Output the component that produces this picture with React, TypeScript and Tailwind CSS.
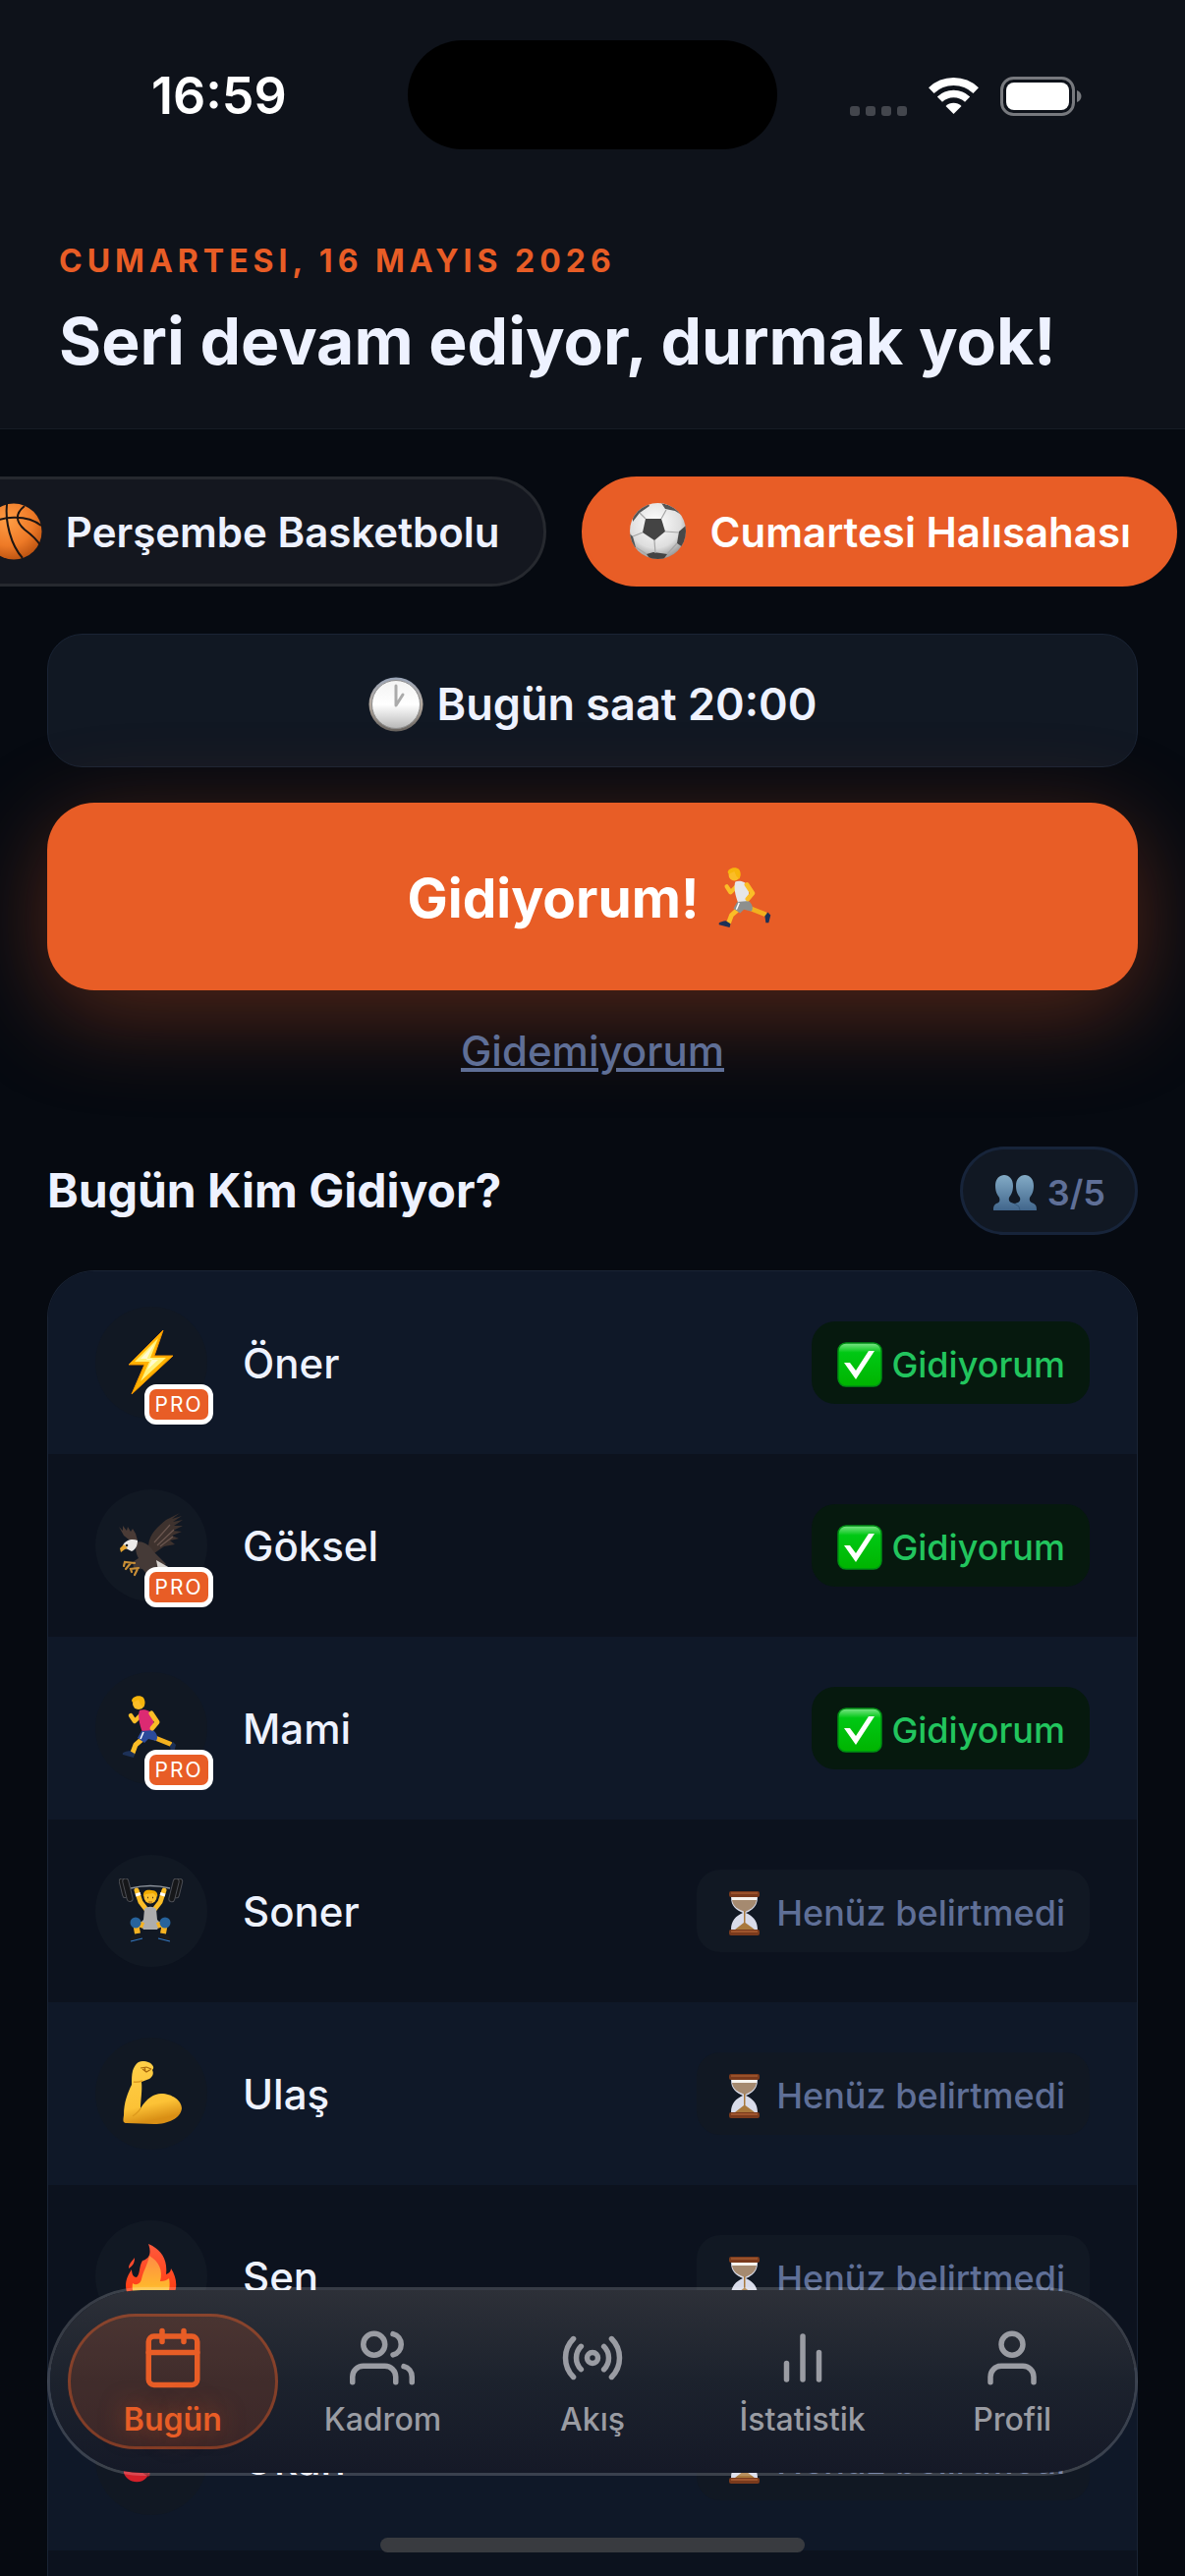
import { useState } from 'react';
import type { IconType } from 'react-icons';
import { FiBarChart2, FiCalendar, FiRadio, FiUser, FiUsers } from 'react-icons/fi';

type Member = {
  name: string;
  avatar: React.ReactNode;
  pro?: boolean;
  going?: boolean;
};

type Tab = {
  label: string;
  Icon: IconType;
};

function Basketball() {
  return (
    <svg viewBox="0 0 60 60" className="size-[60px] shrink-0" aria-hidden="true">
      <defs>
        <radialGradient id="ball" cx="0.4" cy="0.3" r="0.75">
          <stop offset="0" stopColor="#ff9d45" />
          <stop offset="0.6" stopColor="#ee7a27" />
          <stop offset="1" stopColor="#b8500f" />
        </radialGradient>
      </defs>
      <circle cx="31" cy="30" r="28.5" fill="url(#ball)" />
      <g fill="none" stroke="#1d1512" strokeWidth="2">
        <path d="M24 2C22 20 28 44 40 57" />
        <path d="M42 4C32 12 33 20 42 28C50 34 55 39 58 44" />
        <path d="M3 24C18 14 44 12 59 24" />
        <path d="M7 45C11 32 8 26 4 22" />
      </g>
    </svg>
  );
}

function Football() {
  return (
    <svg viewBox="0 0 60 60" className="size-[60px] shrink-0" aria-hidden="true">
      <defs>
        <radialGradient id="leather" cx="0.45" cy="0.35" r="0.65">
          <stop offset="0" stopColor="#ffffff" />
          <stop offset="0.7" stopColor="#dedede" />
          <stop offset="1" stopColor="#9b9b9b" />
        </radialGradient>
        <clipPath id="footballEdge">
          <circle cx="30.5" cy="29.5" r="28.5" />
        </clipPath>
      </defs>
      <circle cx="30.5" cy="29.5" r="28.5" fill="url(#leather)" />
      <g clipPath="url(#footballEdge)">
        <path d="M18 17L34 17L38 30L27 39L15 31Z" fill="#444" />
        <path d="M5 12L20 0L22 4L12 11L5 20Z" fill="#555" />
        <path d="M34 1L52 6L56 14L48 9L38 7Z" fill="#555" />
        <path d="M0 31L5 35L8 46L2 46Z" fill="#555" />
        <path d="M59 24L52 30L50 42L56 46L60 36Z" fill="#484848" />
        <path d="M19 53L26 51L40 53L35 60H24Z" fill="#444" />
        <path d="M18 17L12 11M34 17L39 8M38 30L52 31M27 39L28 52M15 31L5 35M8 46L19 53M50 42L40 53" fill="none" stroke="#a5a5a5" strokeWidth="1.2" />
      </g>
    </svg>
  );
}

function Clock() {
  return (
    <svg viewBox="0 0 56 56" className="size-14 shrink-0" aria-hidden="true">
      <defs>
        <linearGradient id="rim" x1="0" y1="0" x2="0" y2="1">
          <stop offset="0" stopColor="#9aa5b8" />
          <stop offset="0.5" stopColor="#b5aaa0" />
          <stop offset="1" stopColor="#66625e" />
        </linearGradient>
        <linearGradient id="face" x1="0" y1="0" x2="0" y2="1">
          <stop offset="0" stopColor="#f3f3f3" />
          <stop offset="0.5" stopColor="#ffffff" />
          <stop offset="1" stopColor="#b9b9b9" />
        </linearGradient>
      </defs>
      <circle cx="28" cy="28" r="27.5" fill="url(#rim)" />
      <circle cx="28" cy="28" r="24.5" fill="url(#face)" stroke="#8f8f8f" strokeWidth="1" />
      <path d="M28 9V29L35 18" fill="none" stroke="#ababab" strokeWidth="3" strokeLinecap="round" strokeLinejoin="round" />
    </svg>
  );
}

function Runner({ shirt, shorts, className }: { shirt: string; shorts: string; className: string }) {
  return (
    <svg viewBox="0 0 66 66" className={className} aria-hidden="true">
      <g fill="none" strokeLinecap="round" strokeLinejoin="round">
        <path d="M37 43L52 49" stroke="#f2b01f" strokeWidth="5" />
        <path d="M25 43L17 50L14 58" stroke="#fbbd27" strokeWidth="5" />
        <path d="M23 19L16 26L12 20" stroke="#fbbd27" strokeWidth="4.5" />
      </g>
      <circle cx="20" cy="8" r="6" fill="#fbbd27" />
      <path d="M13 5C14 0 22 -1 25 2C27 5 27 9 25 12L22 9L20 4L14 7Z" fill="#f7b50c" />
      <path d="M21 15C25 13 32 15 34 19C36 25 35 31 35 36L24 37C21 30 19 20 21 15Z" fill={shirt} />
      <path d="M23 36L35 35C39 39 40 42 38 46L30 44L26 48L19 43Z" fill={shorts} />
      <path d="M33 18L39 27L34 33" fill="none" stroke="#fbbd27" strokeWidth="5" strokeLinecap="round" strokeLinejoin="round" />
      <path d="M11 56L16 59L15 63L4 60C3 58 5 57 11 56Z" fill="#1d3157" />
      <path d="M52 51L55 47L58 50L56 58L53 58Z" fill="#1d3157" />
      <path d="M25 37L22 44" stroke="#fff" strokeWidth="1.5" />
    </svg>
  );
}

function Busts() {
  return (
    <svg viewBox="0 0 46 40" className="h-10 w-[46px] shrink-0" aria-hidden="true">
      <defs>
        <linearGradient id="bust" x1="0" y1="0" x2="0" y2="1">
          <stop offset="0" stopColor="#83abc6" />
          <stop offset="1" stopColor="#41668c" />
        </linearGradient>
      </defs>
      <path
        d="M12 2C17 2 21 6 21 13C21 19 19 22 17 25C16 29 18 30 22 31L23 31C27 30 29 29 28 25C26 22 24 19 24 13C24 6 28 2 33 2C38 2 42 6 42 13C42 19 40 22 38 25C37 29 39 30 42 31C45 33 45 35 45 38H1C1 35 1 33 4 31C7 30 8 29 7 25C5 22 3 19 3 13C3 6 7 2 12 2Z"
        fill="url(#bust)"
      />
      <path d="M22 31L27 34L28 38" fill="none" stroke="#35587c" strokeWidth="1" />
    </svg>
  );
}

function CheckMark() {
  return (
    <svg viewBox="0 0 48 48" className="size-12 shrink-0" aria-hidden="true">
      <defs>
        <linearGradient id="checkFill" x1="0" y1="0" x2="0" y2="1">
          <stop offset="0" stopColor="#7ee58a" />
          <stop offset="0.22" stopColor="#00c814" />
          <stop offset="1" stopColor="#00b400" />
        </linearGradient>
      </defs>
      <rect x="2" y="2" width="44" height="44" rx="8" fill="url(#checkFill)" stroke="#008f14" strokeWidth="1.5" />
      <path d="M8 22H14L20 30L33 10H39L20 39Z" fill="#fff" />
    </svg>
  );
}

function Hourglass() {
  return (
    <svg viewBox="0 0 48 48" className="size-12 shrink-0" aria-hidden="true">
      <path d="M10 8H37C37 17 32 21 25 24C32 27 37 32 37 41H10C10 32 15 27 22 24C15 21 10 17 10 8Z" fill="#d9dcea" />
      <path d="M11 11H36C35 17 31 20 24 23C16 20 12 17 11 11Z" fill="#a58a70" />
      <path d="M11 8H36V11H11Z" fill="#f6f3ee" />
      <path d="M23 22H24.5V34L34 41H14L23 34Z" fill="#a9793d" />
      <rect x="8" y="2" width="31" height="6" rx="2" fill="#7a3a1c" />
      <path d="M10 4H37" stroke="#b8683a" strokeWidth="1" />
      <rect x="8" y="41" width="31" height="6" rx="2" fill="#7a3a1c" />
      <path d="M10 43H37" stroke="#c4713f" strokeWidth="1" />
    </svg>
  );
}

function Bolt() {
  return (
    <svg viewBox="0 0 66 66" className="size-[66px]" aria-hidden="true">
      <path d="M45 0L10 35H26L13 65L55 26H36Z" fill="#ffb300" stroke="#f59300" strokeWidth="1" />
      <path d="M40 8L16 32H31L22 52L48 28H32Z" fill="#fff27a" />
      <path d="M36 14L22 29H34L29 40L40 30H28Z" fill="#fffbd0" />
    </svg>
  );
}

function Eagle() {
  return (
    <svg viewBox="0 0 66 66" className="size-[66px]" aria-hidden="true">
      <path d="M0 14L4 18L4 13L8 18L9 14L12 19L14 16L17 21L19 28L10 27L5 23Z" fill="#4a3b36" />
      <path d="M30 34C31 20 40 14 48 7L62 0L54 6L64 3L55 9L65 7L56 13L65 13L55 18L64 19L54 23L61 26L52 28L57 32L46 34L36 41Z" fill="#3e322e" />
      <path d="M36 30L52 12M39 33L56 17M42 34L55 24" stroke="#6b5750" strokeWidth="1.2" fill="none" />
      <path d="M17 30C24 27 32 33 36 40L48 52L40 56L28 62L24 57L15 56L14 50L20 46C17 41 17 36 17 30Z" fill="#453a37" />
      <path d="M38 48L52 56L40 58Z" fill="#d8d4d0" />
      <path d="M4 33C7 27 14 26 19 28C19 33 17 37 13 39L7 36Z" fill="#eceae8" />
      <path d="M5 32L1 36L2 40L6 37L9 36Z" fill="#e6a531" />
      <circle cx="8" cy="33" r="1.3" fill="#222" />
      <path d="M16 51L6 50L5 54M12 51L7 57M20 56L12 57L13 60M19 57L16 63" fill="none" stroke="#c98f36" strokeWidth="2.2" strokeLinecap="round" />
    </svg>
  );
}

function Lifter() {
  return (
    <svg viewBox="0 0 66 66" className="size-[66px]" aria-hidden="true">
      <path d="M12 10Q32 5 52 10" fill="none" stroke="#8d939c" strokeWidth="1.5" />
      <g fill="#161719" stroke="#4c4e54" strokeWidth="1">
        <rect x="2" y="0" width="6" height="20" rx="3" transform="rotate(-14 4 10)" />
        <rect x="6" y="0" width="6" height="24" rx="3" transform="rotate(-14 8 12)" />
        <rect x="57" y="0" width="6" height="20" rx="3" transform="rotate(14 60 10)" />
        <rect x="53" y="0" width="6" height="24" rx="3" transform="rotate(14 56 12)" />
      </g>
      <path d="M18 12L22 24L29 33M46 12L42 24L35 33" fill="none" stroke="#fbbd27" strokeWidth="5" strokeLinecap="round" strokeLinejoin="round" />
      <path d="M17 17L22 15.500M42 15.500L47 17" stroke="#fff" strokeWidth="3" />
      <path d="M26 31C29 28 35 28 38 31L39 42L43 46L39 52H25L21 46L25 42Z" fill="#adadad" />
      <path d="M25 48L17 45L19 56M39 48L47 45L45 56" fill="none" stroke="#f6b221" strokeWidth="6" strokeLinejoin="round" />
      <circle cx="17" cy="45" r="5.5" fill="#27639c" />
      <circle cx="47" cy="45" r="5.5" fill="#27639c" />
      <circle cx="32" cy="19" r="6.5" fill="#fbc02d" />
      <path d="M25 19C24 12 29 11 33 12C38 12 40 15 39 19L35 15L27 16Z" fill="#f0aa00" />
      <path d="M29 19.5H30M34 19.5H35" stroke="#5b3b10" strokeWidth="1.6" />
      <path d="M30 24H34" stroke="#a85d1c" strokeWidth="1" />
      <path d="M17 57H22V60L12 64C11 61 13 59 17 57ZM47 57H42V60L52 64C53 61 51 59 47 57Z" fill="#1b1b1e" />
      <path d="M12 64L24 61M52 64L40 61" stroke="#3478c2" strokeWidth="1.2" />
    </svg>
  );
}

function Biceps() {
  return (
    <svg viewBox="0 0 66 66" className="size-[66px]" aria-hidden="true">
      <defs>
        <linearGradient id="skin" x1="0" y1="0" x2="0.2" y2="1">
          <stop offset="0" stopColor="#ffd04a" />
          <stop offset="0.75" stopColor="#fcc236" />
          <stop offset="1" stopColor="#d98f15" />
        </linearGradient>
      </defs>
      <path
        d="M14 10C16 4 19 0 24 0C29 0 33 2 34 4C36 6 35 8 34 9C36 13 34 16 31 18L23 21C24 30 22 40 22 48C28 38 36 33 43 33C54 33 64 40 64 48C63 58 50 64 36 64L8 63C4 63 4 61 5 55C5 42 9 32 13 24C13 18 13 14 14 10Z"
        fill="url(#skin)"
      />
      <path d="M22 7L28 6L33 8M24 8L28 11L33 8M26 6L27 10" fill="none" stroke="#a8680c" strokeWidth="1.2" />
      <path d="M15 21C18 22 21 21 24 20M22 48C20 52 17 54 14 56" fill="none" stroke="#dd9a1d" strokeWidth="1.5" />
    </svg>
  );
}

function Fire() {
  return (
    <svg viewBox="0 0 66 66" className="size-[66px]" aria-hidden="true">
      <defs>
        <linearGradient id="flame" x1="0" y1="0" x2="0" y2="1">
          <stop offset="0" stopColor="#ff5a3c" />
          <stop offset="1" stopColor="#ff3405" />
        </linearGradient>
        <linearGradient id="flameCore" x1="0" y1="0" x2="0" y2="1">
          <stop offset="0" stopColor="#ff8b45" />
          <stop offset="0.6" stopColor="#ffb52e" />
          <stop offset="1" stopColor="#fff066" />
        </linearGradient>
      </defs>
      <path d="M30 0C42 5 50 15 48 31C51 30 53 28 53 25C57 31 59 38 58 45C56 58 46 66 33 66C18 66 8 57 7 43C7 36 9 32 13 26C13 31 15 34 18 34C22 30 20 24 24 17C32 15 33 8 30 0Z" fill="url(#flame)" />
      <path d="M31 12C41 18 45 27 42 38C46 38 49 37 51 35C54 50 46 62 33 62C20 62 12 52 14 40C18 43 22 40 23 36C25 27 29 22 31 12Z" fill="url(#flameCore)" />
      <path d="M16 14C16 18 15 22 10 25C10 20 13 18 16 14Z" fill="#ff4a2d" />
    </svg>
  );
}

function BoxingGlove() {
  return (
    <svg viewBox="0 0 66 66" className="size-[66px]" aria-hidden="true">
      <path d="M18 20C20 6 34 0 48 4C62 8 66 22 60 32C54 42 42 42 34 44L28 52C24 57 15 58 9 53C3 48 4 42 9 37Z" fill="#d3202a" />
      <path d="M12 36L31 50" stroke="#8b1119" strokeWidth="3" />
      <path d="M27 17C36 16 43 21 42 29" fill="none" stroke="#8b1119" strokeWidth="2" />
    </svg>
  );
}

const members: Member[] = [
  { name: 'Öner', avatar: <Bolt />, pro: true, going: true },
  { name: 'Göksel', avatar: <Eagle />, pro: true, going: true },
  { name: 'Mami', avatar: <Runner shirt="#dc2a72" shorts="#2b4a9b" className="size-[66px]" />, pro: true, going: true },
  { name: 'Soner', avatar: <Lifter /> },
  { name: 'Ulaş', avatar: <Biceps /> },
  { name: 'Sen', avatar: <Fire /> },
  { name: 'Okan', avatar: <BoxingGlove /> },
];

const tabs: Tab[] = [
  { label: 'Bugün', Icon: FiCalendar },
  { label: 'Kadrom', Icon: FiUsers },
  { label: 'Akış', Icon: FiRadio },
  { label: 'İstatistik', Icon: FiBarChart2 },
  { label: 'Profil', Icon: FiUser },
];

function StatusBar() {
  return (
    <div className="grid grid-cols-[1fr_376px_1fr] items-center pt-[41px]">
      <span className="pt-0.5 pl-[154px] text-[52px] leading-[60px] font-semibold text-white">16:59</span>
      <div className="h-[111px] rounded-full bg-black" />
      <div className="flex items-center justify-end gap-[22px] pt-0.5 pr-[105px]">
        <div className="flex gap-1.5 self-end">
          {[0, 1, 2, 3].map((dot) => (
            <span key={dot} className="size-2.5 rounded-[3px] bg-[#43464d]" />
          ))}
        </div>
        <svg viewBox="0 0 51 38" className="h-[38px] w-[51px]" aria-hidden="true">
          <path d="M2.8 13.1A33 33 0 0 1 48.2 13.1" fill="none" stroke="#fff" strokeWidth="8" />
          <path d="M11.4 22.1A20.5 20.5 0 0 1 39.6 22.1" fill="none" stroke="#fff" strokeWidth="7.5" />
          <path d="M25.5 37L17.5 29A11.5 11.5 0 0 1 33.5 29Z" fill="#fff" />
        </svg>
        <svg viewBox="0 0 83 40" className="h-10 w-[83px]" aria-hidden="true">
          <rect x="1.5" y="1.5" width="73" height="37" rx="12" fill="none" stroke="#77797e" strokeWidth="3" />
          <rect x="6" y="6" width="64" height="28" rx="8" fill="#fff" />
          <path d="M78 14C84 16 84 24 78 26Z" fill="#77797e" />
        </svg>
      </div>
    </div>
  );
}

function MemberRow({ member, shaded }: { member: Member; shaded: boolean }) {
  return (
    <li className={`flex shrink-0 items-center px-12 py-9 ${shaded ? 'bg-[#0f1828]' : 'bg-[#0c121e]'}`}>
      <div className="relative flex size-[114px] items-center justify-center rounded-full bg-[#111823]">
        {member.avatar}
        {member.pro && (
          <span className="absolute -right-1.5 -bottom-1.5 flex h-[41px] w-[70px] items-center justify-center rounded-xl border-5 border-white bg-[#e85d26] text-[21px] leading-none tracking-[2px] text-white">
            PRO
          </span>
        )}
      </div>
      <span className="ml-9 flex-1 pt-0.5 text-[42px] leading-[52px] font-medium text-[#eef2ff]">{member.name}</span>
      {member.going ? (
        <span className="flex h-[84px] items-center gap-2 rounded-3xl bg-[#06190e] px-[25px] pt-1 text-[36px] font-medium text-[#22c55e]">
          <CheckMark />
          Gidiyorum
        </span>
      ) : (
        <span className="flex h-[84px] items-center gap-2 rounded-3xl bg-[#111823] px-[25px] pt-1 text-[36px] font-medium text-[#5f6f97]">
          <Hourglass />
          Henüz belirtmedi
        </span>
      )}
    </li>
  );
}

export default function App() {
  const [activeTab, setActiveTab] = useState('Bugün');

  return (
    <div className="relative flex h-screen flex-col overflow-hidden bg-[#060a11] font-['Inter','Noto_Sans',sans-serif]">
      <header className="shrink-0 border-b border-[#171c25] bg-[#0e121a] pb-12">
        <StatusBar />
        <div className="px-[60px] pt-[94px]">
          <p className="text-[32px] leading-10 font-bold tracking-[5px] text-[#e85d26]">CUMARTESI, 16 MAYIS 2026</p>
          <h1 className="mt-5 text-[66px] leading-[82px] font-bold whitespace-nowrap text-[#eef2ff]">Seri devam ediyor, durmak yok!</h1>
        </div>
      </header>

      <main className="flex min-h-0 flex-1 flex-col">
        <div className="flex shrink-0 justify-end gap-9 overflow-hidden py-12 pr-2 text-[42px] font-semibold whitespace-nowrap">
          <button className="flex h-28 shrink-0 items-center gap-6 rounded-full border-3 border-[#26292f] bg-[#14171f] px-11 text-[#eef2ff]">
            <Basketball />
            Perşembe Basketbolu
          </button>
          <button className="flex h-28 shrink-0 items-center gap-6 rounded-full border-3 border-[#e85d26] bg-[#e85d26] px-11 text-white">
            <Football />
            Cumartesi Halısahası
          </button>
        </div>

        <section className="flex shrink-0 flex-col px-12">
          <div className="flex h-[136px] items-center justify-center gap-3.5 rounded-[36px] border border-[#1a2435] bg-[#111823] pt-2 text-[45px] font-semibold text-[#eef2ff]">
            <Clock />
            Bugün saat 20:00
          </div>
          <button className="mt-9 flex h-[191px] items-center justify-center gap-4 rounded-[48px] bg-[#e85d26] pt-1 text-[55px] font-bold text-white shadow-[0_24px_96px_rgba(232,93,38,0.35)]">
            Gidiyorum!
            <Runner shirt="#e6e6e8" shorts="#8d8f8e" className="size-16" />
          </button>
          <button className="mt-9 self-center text-[42px] leading-[51px] font-medium text-[#5f6f97] underline decoration-4">
            Gidemiyorum
          </button>
        </section>

        <section className="mt-18 flex min-h-0 flex-1 flex-col px-12">
          <div className="flex shrink-0 items-center justify-between">
            <h2 className="text-[48px] leading-[60px] font-bold text-[#eef2ff]">Bugün Kim Gidiyor?</h2>
            <span className="flex h-[90px] items-center gap-2.5 rounded-full border-3 border-[#17243a] bg-[#111823] px-[30px] pt-1 text-[36px] font-semibold text-[#5f6f97]">
              <Busts />
              3/5
            </span>
          </div>
          <ul className="mt-9 flex min-h-0 flex-1 flex-col overflow-hidden rounded-t-[48px] border border-b-0 border-[#1a2435] bg-[#0c121e]">
            {members.map((member, index) => (
              <MemberRow key={member.name} member={member} shaded={index % 2 === 0} />
            ))}
          </ul>
        </section>
      </main>

      {/* Floating tab bar over the list */}
      <nav className="absolute inset-x-12 bottom-[102px] rounded-full border-3 border-white/18">
        <div className="flex rounded-full bg-linear-to-b from-[#2d3038] via-[#1c222d] to-[#151927] px-[18px] py-6">
          {tabs.map(({ label, Icon }) => {
            const active = label === activeTab;
            return (
              <button
                key={label}
                onClick={() => setActiveTab(label)}
                className={`flex h-[138px] flex-1 basis-0 flex-col items-center justify-center gap-2.5 rounded-full border-3 pt-0.5 text-[32px] leading-10 ${
                  active ? 'border-[#e85d26]/40 bg-[#e85d26]/18 font-semibold text-[#e85d26] text-shadow-[0_0_24px_rgba(232,93,38,0.5)]' : 'border-transparent font-medium text-[#9a9ca3]'
                }`}
              >
                <Icon className="size-[66px]" />
                {label}
              </button>
            );
          })}
        </div>
      </nav>
      <div className="absolute bottom-6 left-1/2 h-[15px] w-[432px] -translate-x-1/2 rounded-full bg-[#393b40]" />
    </div>
  );
}
